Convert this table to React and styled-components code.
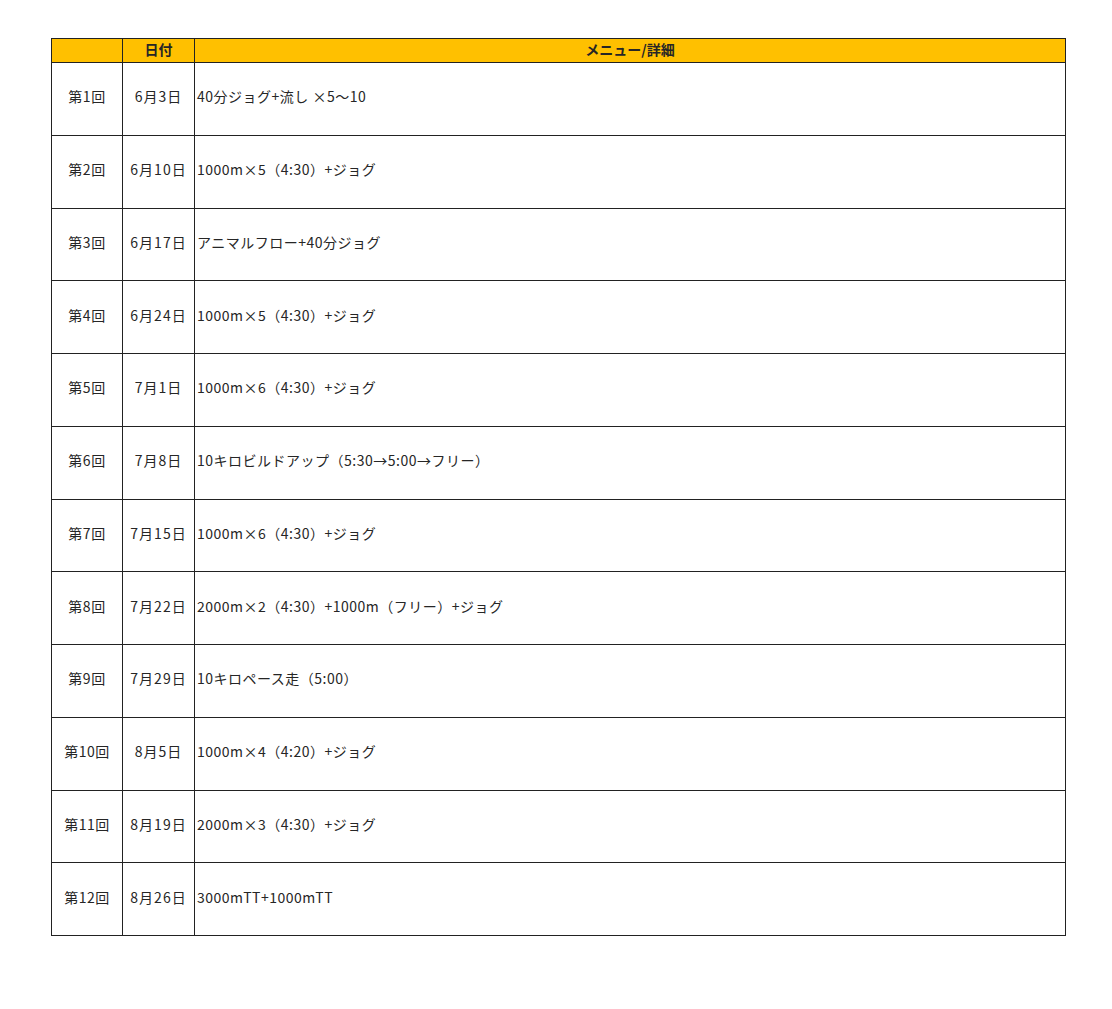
import styled, { createGlobalStyle } from 'styled-components';

const GlobalStyle = createGlobalStyle`
    body {
        margin: 0;
        background: #ffffff;
        font-family: "Noto Sans CJK JP", "Noto Sans", sans-serif;
        color: #262626;
    }
`;

const Page = styled.div`
    padding: 38px 0 0 51px;
`;

const Table = styled.table`
    border-collapse: collapse;
    table-layout: fixed;
    width: 1015px;
    font-size: 14px;
`;

const HeadRow = styled.tr`
    height: 24px;
`;

const HeadCell = styled.th`
    background: #ffc000;
    border: 1px solid #222;
    padding: 0 0 4px;
    font-weight: bold;
    font-size: 14px;
    line-height: 16px;
    text-align: center;
`;

const Row = styled.tr`
    height: 72.75px;
`;

const Cell = styled.td`
    border: 1px solid #222;
    padding: ${(p) => (p.$left ? '0 2px 5px' : '0 0 5px')};
    text-align: ${(p) => (p.$left ? 'left' : 'center')};
    vertical-align: middle;
    white-space: nowrap;
    letter-spacing: ${(p) => (p.$spaced ? '1px' : '0.5px')};
`;

const sessions = [
    ['第1回', '6月3日', '40分ジョグ+流し ×5〜10'],
    ['第2回', '6月10日', '1000m×5（4:30）+ジョグ'],
    ['第3回', '6月17日', 'アニマルフロー+40分ジョグ'],
    ['第4回', '6月24日', '1000m×5（4:30）+ジョグ'],
    ['第5回', '7月1日', '1000m×6（4:30）+ジョグ'],
    ['第6回', '7月8日', '10キロビルドアップ（5:30→5:00→フリー）'],
    ['第7回', '7月15日', '1000m×6（4:30）+ジョグ'],
    ['第8回', '7月22日', '2000m×2（4:30）+1000m（フリー）+ジョグ'],
    ['第9回', '7月29日', '10キロペース走（5:00）'],
    ['第10回', '8月5日', '1000m×4（4:20）+ジョグ'],
    ['第11回', '8月19日', '2000m×3（4:30）+ジョグ'],
    ['第12回', '8月26日', '3000mTT+1000mTT'],
];

export default function App() {
    return (
        <Page>
            <GlobalStyle />
            <Table>
                <colgroup>
                    <col style={{ width: 71 }} />
                    <col style={{ width: 72 }} />
                    <col />
                </colgroup>
                <thead>
                    <HeadRow>
                        <HeadCell />
                        <HeadCell>日付</HeadCell>
                        <HeadCell>メニュー/詳細</HeadCell>
                    </HeadRow>
                </thead>
                <tbody>
                    {sessions.map(([no, date, menu]) => (
                        <Row key={no}>
                            <Cell>{no}</Cell>
                            <Cell $spaced>{date}</Cell>
                            <Cell $left>{menu}</Cell>
                        </Row>
                    ))}
                </tbody>
            </Table>
        </Page>
    );
}
